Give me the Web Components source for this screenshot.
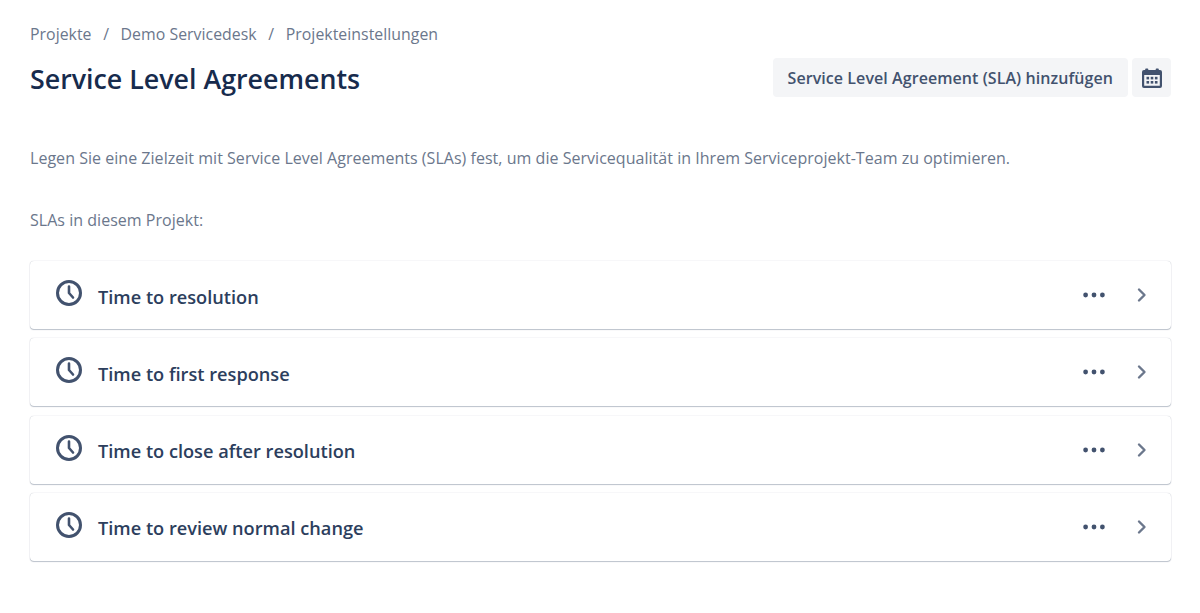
<!DOCTYPE html>
<html><head><meta charset="utf-8"><style>
html,body{margin:0;padding:0;background:#fff}
body{font-family:"Open Sans","Noto Sans",sans-serif}
</style></head><body>
<template id="t-page"><style>
:host{display:block;padding:24px 29px 40px 30px;color:#6b778c;font:16px/20px "Open Sans","Noto Sans",sans-serif;letter-spacing:.03px}
.crumbs{display:flex;gap:11.6px;color:#6b778c;height:20px;font-size:15.85px}
.head{display:flex;justify-content:space-between;align-items:flex-start;margin-top:14px;height:39px}
h1{margin:0;font-size:26.8px;line-height:42px;font-weight:600;color:#172b4d;letter-spacing:0}
.actions{display:flex;gap:4px}
p{margin:0}
.intro{margin-top:51px}
.lead{margin-top:42px;margin-bottom:31px}
.list{display:flex;flex-direction:column;gap:9.33px}
</style>
<div class="crumbs"><span>Projekte</span><span>/</span><span>Demo Servicedesk</span><span>/</span><span>Projekteinstellungen</span></div>
<div class="head"><h1>Service Level Agreements</h1><div class="actions"><slot name="actions"></slot></div></div>
<p class="intro">Legen Sie eine Zielzeit mit Service Level Agreements (SLAs) fest, um die Servicequalität in Ihrem Serviceprojekt-Team zu optimieren.</p>
<p class="lead">SLAs in diesem Projekt:</p>
<div class="list"><slot></slot></div>
</template>
<template id="t-btn"><style>
:host{display:flex;align-items:center;justify-content:center;height:39px;box-sizing:border-box;padding:0 15px;background:#f4f5f7;border-radius:4px;color:#42526e;font:600 16px/20px "Open Sans","Noto Sans",sans-serif;letter-spacing:.07px}
:host([icon]){padding:0;width:39px}
</style><slot></slot></template>
<template id="t-card"><style>
:host{display:flex;align-items:center;height:68px;box-sizing:border-box;padding:0 23px 0 25px;background:#fff;border-radius:4px;box-shadow:0 1px 1px rgba(9,30,66,.25),0 0 1px rgba(9,30,66,.31);color:#2c3e5d}
.clock{width:28px;height:28px;margin-top:-4px;flex:none}
.name{margin-left:15px;font:600 18.2px/24px "Open Sans","Noto Sans",sans-serif;flex:1;margin-top:3px;letter-spacing:0}
.more{width:24px;height:24px;margin-right:24px}
.chev{width:24px;height:24px;margin-right:-6px}
</style>
<svg class="clock" viewBox="0 0 28 28" fill="none" stroke="#42526e"><circle cx="14" cy="14" r="11.5" stroke-width="3"/><path d="M14 7.5V14l4 4.5" stroke-width="2.6" stroke-linecap="round" stroke-linejoin="round"/></svg>
<span class="name"><slot></slot></span>
<svg class="more" viewBox="0 0 24 24" fill="#42526e"><circle cx="3.6" cy="12" r="2.4"/><circle cx="12" cy="12" r="2.4"/><circle cx="20.4" cy="12" r="2.4"/></svg>
<svg class="chev" viewBox="0 0 24 24" fill="none" stroke="#6b778c" stroke-width="2.4" stroke-linecap="round" stroke-linejoin="round"><path d="M9 6.5l5.5 5.5L9 17.5"/></svg>
</template>
<sla-page>
<sla-btn slot="actions">Service Level Agreement (SLA) hinzufügen</sla-btn>
<sla-btn slot="actions" icon><svg width="24" height="24" viewBox="0 0 24 24"><path fill="#42526e" fill-rule="evenodd" d="M6 2.5h1.5a.8.8 0 0 1 .8.8V4h7.4v-.7a.8.8 0 0 1 .8-.8H18a.8.8 0 0 1 .8.8V4H20a2 2 0 0 1 2 2v14a2 2 0 0 1-2 2H4a2 2 0 0 1-2-2V6a2 2 0 0 1 2-2h1.2v-.7A.8.8 0 0 1 6 2.5zM4.2 9v10.8h15.6V9z"/><g fill="#42526e"><rect x="6.5" y="10.8" width="2.6" height="2.6"/><rect x="10.7" y="10.8" width="2.6" height="2.6"/><rect x="14.9" y="10.8" width="2.6" height="2.6"/><rect x="6.5" y="15" width="2.6" height="2.6"/><rect x="10.7" y="15" width="2.6" height="2.6"/><rect x="14.9" y="15" width="2.6" height="2.6"/></g></svg></sla-btn>
<sla-card>Time to resolution</sla-card>
<sla-card>Time to first response</sla-card>
<sla-card>Time to close after resolution</sla-card>
<sla-card>Time to review normal change</sla-card>
</sla-page>
<script>
for (const [tag, id] of [['sla-page','t-page'],['sla-btn','t-btn'],['sla-card','t-card']]) {
  customElements.define(tag, class extends HTMLElement {
    constructor(){super();this.attachShadow({mode:'open'}).appendChild(document.getElementById(id).content.cloneNode(true));}
  });
}
</script>
</body></html>
